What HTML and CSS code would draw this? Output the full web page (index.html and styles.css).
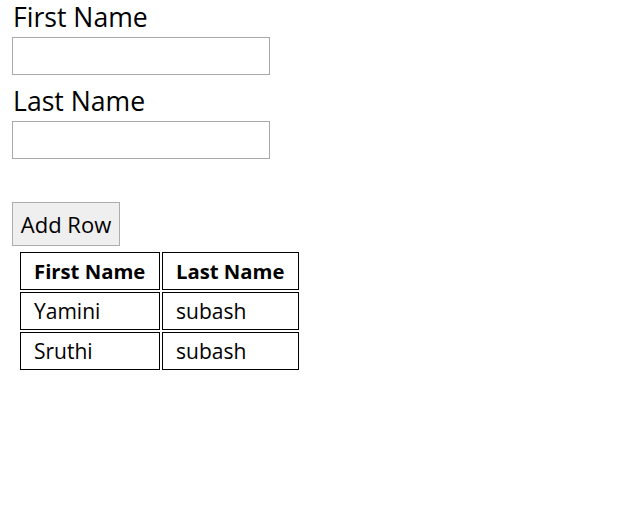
FILE: index.html
```html
<!DOCTYPE html>
<html>
<head>
<meta charset="utf-8">
<link rel="stylesheet" href="styles.css">
</head>
<body>
<div class="page">
  <label class="label" for="fn">First Name</label>
  <input class="field" id="fn" type="text">
  <label class="label label-next" for="ln">Last Name</label>
  <input class="field" id="ln" type="text">
  <button class="btn" type="button">Add Row</button>
  <table class="grid">
    <thead>
      <tr><th>First Name</th><th>Last Name</th></tr>
    </thead>
    <tbody>
      <tr><td>Yamini</td><td>subash</td></tr>
      <tr><td>Sruthi</td><td>subash</td></tr>
    </tbody>
  </table>
</div>
</body>
</html>
```
FILE: styles.css
```css
html, body {
  margin: 0;
  padding: 0;
  background: #fff;
}
.page {
  display: flex;
  flex-direction: column;
  align-items: flex-start;
  padding: 0 12px;
  font-family: "Open Sans", "Noto Sans", sans-serif;
  color: #000;
}
.label {
  display: block;
  font-size: 26.6px;
  line-height: 34px;
  height: 37px;
  padding-left: 1px;
}
.label-next {
  margin-top: 9px;
}
.field {
  box-sizing: border-box;
  width: 258px;
  height: 38px;
  margin: 0;
  border: 1px solid #a9a9a9;
  background: #fff;
  font: inherit;
}
.btn {
  box-sizing: border-box;
  margin-top: 43px;
  height: 44px;
  width: 108px;
  padding: 0;
  border: 1px solid #adadad;
  background: #efefef;
  font-family: inherit;
  font-size: 22px;
  color: #000;
}
.grid {
  margin-top: 4px;
  margin-left: 6px;
  border-spacing: 2px;
  font-size: 21px;
}
.grid th, .grid td {
  box-sizing: border-box;
  border: 1px solid #000;
  height: 38px;
  padding: 0 12px 0 13px;
  text-align: left;
}
.grid th:first-child, .grid td:first-child { width: 140px; }
.grid th:last-child, .grid td:last-child { width: 137px; }
.grid th { font-weight: bold; font-size: 20.3px; }
.grid td { font-weight: normal; }
```
